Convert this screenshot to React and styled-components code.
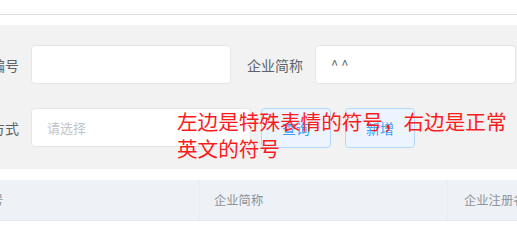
import React from "react";
import styled, { createGlobalStyle } from "styled-components";

const GlobalStyle = createGlobalStyle`
  body {
    margin: 0;
    background: #fff;
    font-family: "Noto Sans CJK SC", "Noto Sans", sans-serif;
    overflow: hidden;
  }
`;

const Page = styled.div`
  position: relative;
  width: 517px;
  height: 243px;
  overflow: hidden;
`;

const TopBar = styled.div`
  height: 14px;
  border-bottom: 1px solid #dcdfe6;
  margin-bottom: 10px;
`;

const SearchPanel = styled.div`
  background: #f2f2f2;
  height: 144px;
  box-sizing: border-box;
  padding: 20px 0 0 0;
  margin-left: -49px;
  display: flex;
  flex-direction: column;
  gap: 24px;
`;

const FormRow = styled.div`
  display: flex;
  align-items: center;
  height: 39px;
`;

const FormItem = styled.div`
  display: flex;
  align-items: center;
  margin-right: ${({ gap }) => gap || 4}px;
`;

const Label = styled.label`
  width: 80px;
  box-sizing: border-box;
  padding-right: 12px;
  text-align: right;
  font-size: 14px;
  color: #606266;
  white-space: nowrap;
`;

const Input = styled.div`
  width: ${({ w }) => w || 200}px;
  height: 39px;
  box-sizing: border-box;
  background: #fff;
  border: 1px solid #e4e6eb;
  border-radius: 4px;
  padding: 0 15px;
  display: flex;
  align-items: center;
  font-size: 13px;
  color: ${({ placeholder }) => (placeholder ? "#c0c4cc" : "#606266")};
  white-space: pre;
`;

const Button = styled.button`
  width: 70px;
  height: 40px;
  margin-left: ${({ ml }) => ml || 0}px;
  background: #ecf5ff;
  border: 1px solid #b3d8ff;
  border-radius: 4px;
  color: #409eff;
  font-family: inherit;
  font-size: 14px;
  padding: 0;
`;

const TableHead = styled.div`
  margin-top: 11px;
  margin-left: -35px;
  height: 40px;
  display: flex;
  background: #eef1f5;
  border-bottom: 1px solid #e6e9ee;
`;

const HeadCell = styled.div`
  width: ${({ w }) => w}px;
  flex-shrink: 0;
  box-sizing: border-box;
  padding-left: ${({ pl }) => pl || 14}px;
  border-right: 1px solid #e8ebf0;
  display: flex;
  align-items: center;
  font-size: 12.3px;
  color: #909399;
  white-space: nowrap;
`;

const Note = styled.div`
  position: absolute;
  left: 177px;
  top: 108px;
  width: 336px;
  font-size: 20.6px;
  line-height: 27px;
  color: #fb1c1c;
`;

export default function App() {
  return (
    <Page>
      <GlobalStyle />
      <TopBar />
      <SearchPanel>
        <FormRow>
          <FormItem>
            <Label>企业编号</Label>
            <Input />
          </FormItem>
          <FormItem>
            <Label>企业简称</Label>
            <Input w={201}>{"^ ^"}</Input>
          </FormItem>
        </FormRow>
        <FormRow>
          <FormItem gap={10}>
            <Label>结算方式</Label>
            <Input w={220} placeholder="true">请选择</Input>
          </FormItem>
          <Button>查询</Button>
          <Button ml={14}>新增</Button>
        </FormRow>
      </SearchPanel>
      <TableHead>
        <HeadCell w={235}>序号</HeadCell>
        <HeadCell w={248}>企业简称</HeadCell>
        <HeadCell w={200} pl={16}>企业注册名称</HeadCell>
      </TableHead>
      <Note>左边是特殊表情的符号，右边是正常英文的符号</Note>
    </Page>
  );
}
